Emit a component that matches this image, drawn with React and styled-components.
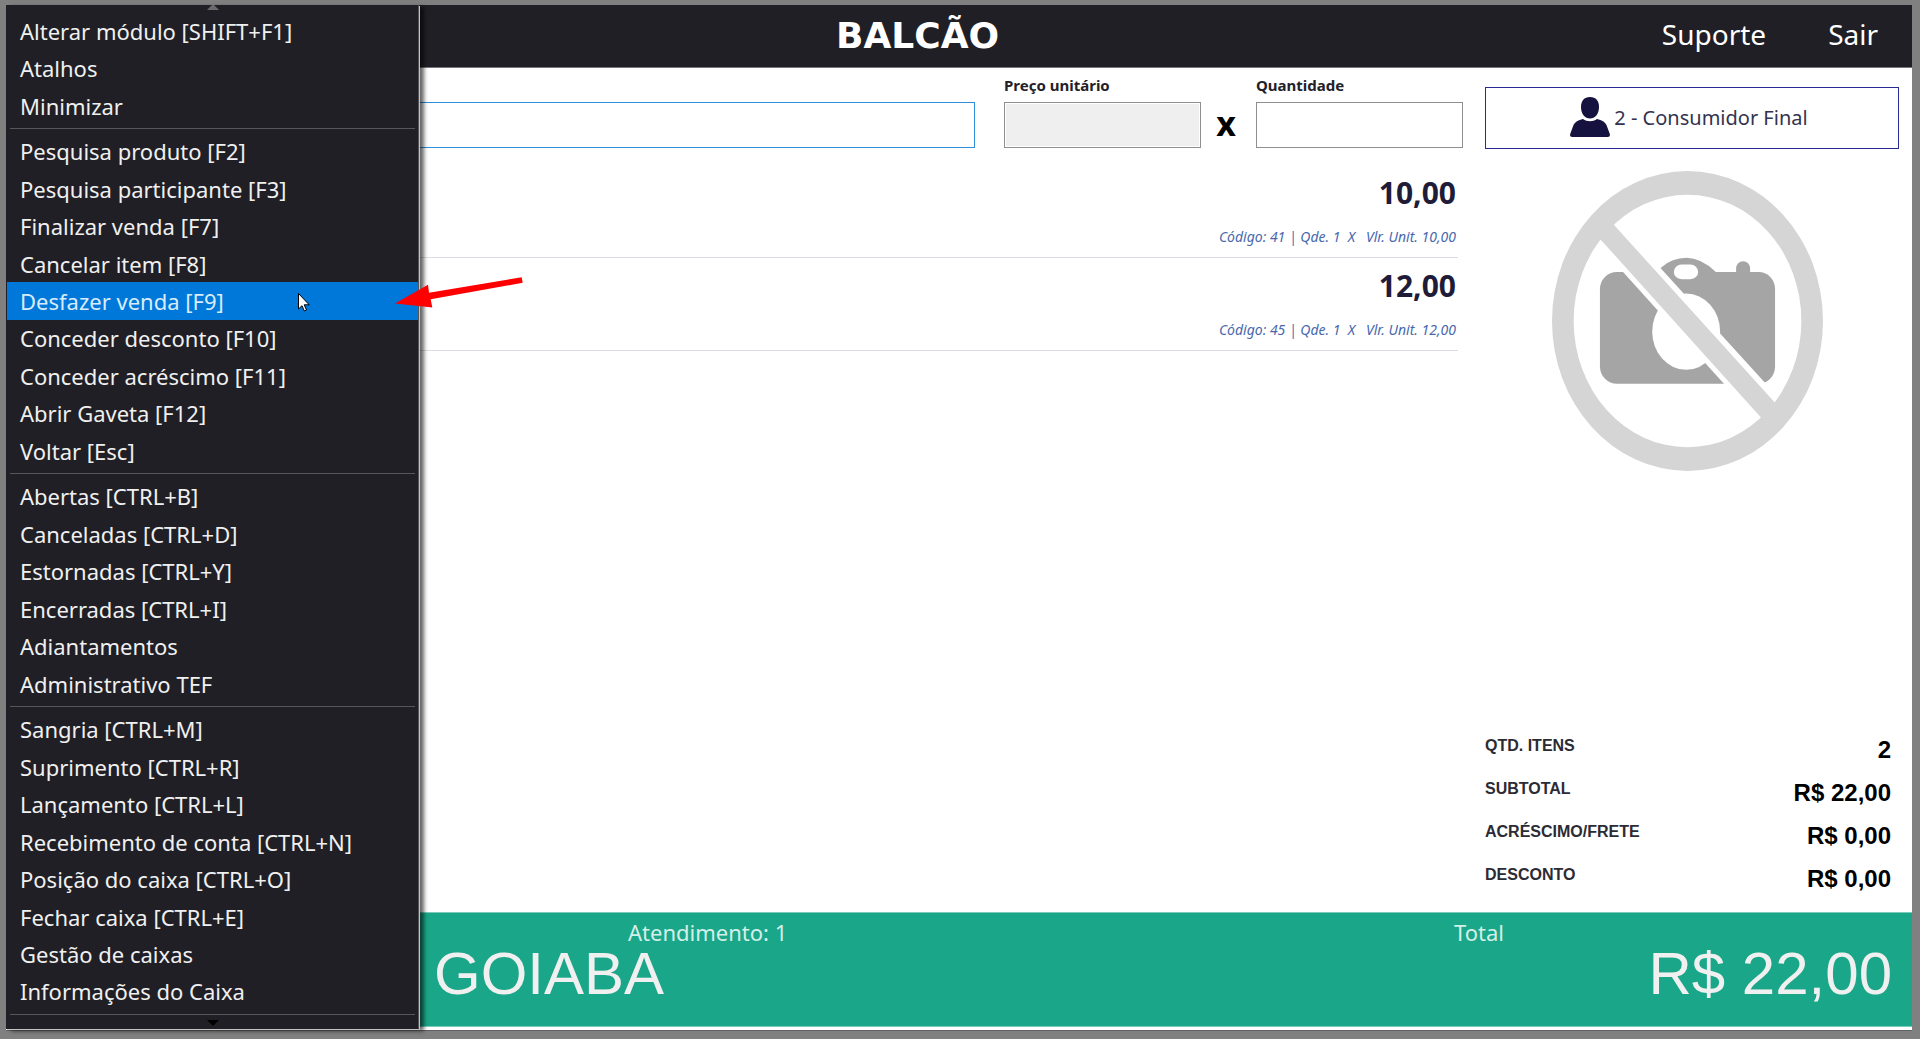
import React from 'react'
import styled, { createGlobalStyle } from 'styled-components';

const menuGroups = [
  ['Alterar módulo [SHIFT+F1]', 'Atalhos', 'Minimizar'],
  [
    'Pesquisa produto [F2]',
    'Pesquisa participante [F3]',
    'Finalizar venda [F7]',
    'Cancelar item [F8]',
    'Desfazer venda [F9]',
    'Conceder desconto [F10]',
    'Conceder acréscimo [F11]',
    'Abrir Gaveta [F12]',
    'Voltar [Esc]',
  ],
  [
    'Abertas [CTRL+B]',
    'Canceladas [CTRL+D]',
    'Estornadas [CTRL+Y]',
    'Encerradas [CTRL+I]',
    'Adiantamentos',
    'Administrativo TEF',
  ],
  [
    'Sangria [CTRL+M]',
    'Suprimento [CTRL+R]',
    'Lançamento [CTRL+L]',
    'Recebimento de conta [CTRL+N]',
    'Posição do caixa [CTRL+O]',
    'Fechar caixa [CTRL+E]',
    'Gestão de caixas',
    'Informações do Caixa',
  ],
];

const saleItems = [
  { code: 41, price: '10,00' },
  { code: 45, price: '12,00' },
];

const totals = [
  ['QTD. ITENS', '2'],
  ['SUBTOTAL', 'R$ 22,00'],
  ['ACRÉSCIMO/FRETE', 'R$ 0,00'],
  ['DESCONTO', 'R$ 0,00'],
];

const SideMenu = () => (
  <Menu>
    <MenuScroll>
      <svg width="12" height="5" viewBox="0 0 12 5"><path d="M0 5 5 0h2l5 5z" fill="#6b6b6e"/></svg>
    </MenuScroll>
    {menuGroups.map((group) => (
      <React.Fragment key={group[0]}>
        {group.map((label) => (
          <MenuItem key={label} $active={label.startsWith('Desfazer')}>{label}</MenuItem>
        ))}
        <Separator/>
      </React.Fragment>
    ))}
    <MenuScroll $bottom>
      <svg width="12" height="6" viewBox="0 0 12 6"><path d="M0 0h12L6 6z" fill="#000"/></svg>
    </MenuScroll>
  </Menu>
);

const NoPhoto = () => (
  <Photo viewBox="95 62 814 898" preserveAspectRatio="none" role="img" aria-label="Sem foto">
    <path
      fill="#a5a5a5"
      fillRule="evenodd"
      d="M290 364H421V352Q456 322 499 322T587 364H648V354A21 22 0 0 1 690 354V364H716A49 52 0 0 1 765 416V648A49 52 0 0 1 716 699H290A51 52 0 0 1 239 648V416A51 52 0 0 1 290 364Z
         M484 342A23 22 0 0 0 484 386H511A23 22 0 0 0 511 342Z"
    />
    <ellipse cx="498" cy="543" rx="102" ry="114" fill="#fff"/>
    <path d="M263 314 286 205 790 756 745 846Z" fill="#fff"/>
    <path d="M221 245 261 201 784 777 743 822Z" fill="#d5d5d5"/>
    <path
      fill="#d5d5d5"
      fillRule="evenodd"
      d="M95 511A407 449 0 0 1 909 511A407 449 0 0 1 95 511Z M160 511A342 378 0 0 0 844 511A342 378 0 0 0 160 511Z"
    />
  </Photo>
);

const App = () => {
  return (
    <Screen>
      <GlobalStyle/>
      <Window>
        <Header>
          <Title>BALCÃO</Title>
          <HeaderNav>
            <HeaderLink href="#suporte">Suporte</HeaderLink>
            <HeaderLink href="#sair">Sair</HeaderLink>
          </HeaderNav>
        </Header>
        <Body>
          <Sale>
            <Form>
              <ProductInput aria-label="Produto"/>
              <Field $width="197px">
                <Label htmlFor="preco">Preço unitário</Label>
                <Input id="preco" readOnly/>
              </Field>
              <Times>x</Times>
              <Field $width="207px">
                <Label htmlFor="quantidade">Quantidade</Label>
                <Input id="quantidade"/>
              </Field>
            </Form>
            <ItemList>
              {saleItems.map((item) => (
                <Item key={item.code}>
                  <Price>{item.price}</Price>
                  <Detail>{`Código: ${item.code} | Qde. 1  X   Vlr. Unit. ${item.price}`}</Detail>
                </Item>
              ))}
            </ItemList>
          </Sale>
          <Summary>
            <Customer type="button">
              <svg width="40" height="40" viewBox="0 0 40 40" fill="#15123f">
                <path d="M20 0c6 0 9 4 9 10 0 7-4 11.500-9 11.500S11 17 11 10C11 4 14 0 20 0z"/>
                <path d="M13 22c4 3 10 3 14 0 5 1 8 3 9.500 6l3.300 9c.5 2-.3 3-2 3H2.200c-1.700 0-2.500-1-2-3l3.300-9C5 25 8 23 13 22z"/>
              </svg>
              2 - Consumidor Final
            </Customer>
            <NoPhoto/>
            <Totals>
              {totals.map(([label, value]) => (
                <TotalRow key={label}>
                  <TotalLabel>{label}</TotalLabel>
                  <TotalValue>{value}</TotalValue>
                </TotalRow>
              ))}
            </Totals>
          </Summary>
        </Body>
        <Footer>
          <FooterBlock>
            <Caption $indent="194px">Atendimento: 1</Caption>
            <Big>GOIABA</Big>
          </FooterBlock>
          <FooterBlock $width="438px">
            <Caption>Total</Caption>
            <Big $right>R$ 22,00</Big>
          </FooterBlock>
        </Footer>
        <SideMenu/>
        <Cursor viewBox="0 0 12 19">
          <path d="M.5.500v15.500l3.500-3.300 2.300 5.300 2.200-1-2.300-5.200h5z" fill="#fff" stroke="#000"/>
        </Cursor>
        <Arrow viewBox="0 0 384 92" fill="#f00">
          <path d="M0 79 99 23 102 47 380 0 383 17 107 66 112 91z"/>
        </Arrow>
      </Window>
    </Screen>
  )
}

export default App

const GlobalStyle = createGlobalStyle`
  * {
    box-sizing: border-box;
  }

  body {
    margin: 0;
    font-family: "Noto Sans", "Open Sans", sans-serif;
  }
`;

const Screen = styled.div`
  min-height: 100vh;
  display: flex;
  padding: 5px 8px 8px 6px;
  background-color: #808080;
`;

const Window = styled.div`
  position: relative;
  flex: 1;
  display: flex;
  flex-direction: column;
  padding-bottom: 3px;
  background-color: #fff;
  border-bottom: 1px solid #606060;
`;

const Header = styled.header`
  display: flex;
  align-items: flex-start;
  height: 63px;
  padding: 0 34px 0 830px;
  border-bottom: 1px solid #77767a;
  background-color: #201f25;
`;

const Title = styled.h1`
  flex: 1;
  margin: 0;
  font-family: "DejaVu Sans", sans-serif;
  font-size: 36px;
  line-height: 62px;
  color: #fff;
`;

const HeaderNav = styled.nav`
  display: flex;
  gap: 62px;
`;

const HeaderLink = styled.a`
  font-size: 28px;
  line-height: 58px;
  color: #fff;
  text-decoration: none;
`;

const Body = styled.main`
  flex: 1;
  display: flex;
  gap: 22px;
  padding-right: 13px;
`;

const Sale = styled.section`
  flex: 1;
`;

const Form = styled.form`
  display: flex;
  align-items: flex-end;
  padding-top: 7px;
`;

const Input = styled.input`
  width: 100%;
  height: 46px;
  padding: 1px;
  border: 1px solid #8f8f8f;
  background-color: #fff;
  font-size: 20px;

  &:read-only {
    background-color: #efefef;
    background-clip: content-box;
  }
`;

const ProductInput = styled(Input)`
  flex: 1;
  margin-right: 29px;
  border-color: #2f8fdb;
`;

const Field = styled.div`
  display: flex;
  flex-direction: column;
  gap: 7px;
  width: ${(props) => props.$width};
`;

const Label = styled.label`
  font-size: 15px;
  font-weight: bold;
  line-height: 20px;
  color: #222129;
`;

const Times = styled.span`
  width: 55px;
  padding-right: 5px;
  font-size: 34px;
  font-weight: bold;
  line-height: 50px;
  text-align: center;
  color: #000;
`;

const ItemList = styled.ul`
  margin: 17px 5px 0 0;
  padding: 0;
  list-style: none;
`;

const Item = styled.li`
  display: flex;
  flex-direction: column;
  align-items: flex-end;
  gap: 16px;
  padding: 10px 2px;
  border-bottom: 1px solid #dcdce2;
`;

const Price = styled.strong`
  font-size: 30px;
  line-height: 36px;
  color: #1e1c38;
`;

const Detail = styled.span`
  font-size: 14px;
  font-style: italic;
  line-height: 20px;
  white-space: pre;
  color: #4868ad;
`;

const Summary = styled.aside`
  width: 414px;
  display: flex;
  flex-direction: column;
  padding-top: 19px;
`;

const Customer = styled.button`
  display: flex;
  align-items: center;
  justify-content: center;
  gap: 4px;
  height: 62px;
  padding: 0 6px 2px 0;
  border: 1px solid #2a2a94;
  background-color: #fff;
  font-family: inherit;
  font-size: 20px;
  color: #33334f;
`;

const Photo = styled.svg`
  width: 271px;
  height: 300px;
  margin: 22px 0 0 67px;
`;

const Totals = styled.dl`
  margin: auto 8px 12px 0;
  font-family: "Liberation Sans", Arial, sans-serif;
  font-weight: bold;
`;

const TotalRow = styled.div`
  display: flex;
  justify-content: space-between;
  height: 43px;
`;

const TotalLabel = styled.dt`
  font-size: 16px;
  line-height: 36px;
  color: #2c2b33;
`;

const TotalValue = styled.dd`
  margin: 0;
  font-size: 24px;
  line-height: 44px;
  color: #000;
`;

const Footer = styled.footer`
  display: flex;
  justify-content: space-between;
  height: 115px;
  padding: 0 20px 0 428px;
  border: 1px solid #7bcbb9;
  border-width: 1px 0;
  background-color: #1aa688;
  color: #f0f0f0;
`;

const FooterBlock = styled.div`
  display: flex;
  flex-direction: column;
  padding-top: 3px;
  width: ${(props) => props.$width};
`;

const Caption = styled.span`
  padding-left: ${(props) => props.$indent};
  font-size: 22px;
  line-height: 32px;
  color: #d5efe8;
`;

const Big = styled.span`
  font-family: "Liberation Sans", Arial, sans-serif;
  font-size: 60px;
  line-height: 52px;
  text-align: ${(props) => (props.$right ? 'right' : 'left')};
`;

const Menu = styled.nav`
  position: absolute;
  top: 0;
  bottom: 1px;
  left: 0;
  width: 413px;
  display: flex;
  flex-direction: column;
  border: 1px solid #201f25;
  border-top: 0;
  border-right: 1px solid #55555a;
  background-color: #201f25;
  box-shadow: 1px 1px 0 #c4c4c4, 5px 2px 4px rgba(0, 0, 0, 0.6);
`;

const MenuScroll = styled.div`
  display: flex;
  justify-content: center;
  align-items: ${(props) => (props.$bottom ? 'center' : 'flex-start')};
  height: ${(props) => (props.$bottom ? '10px' : '7px')};
`;

const MenuItem = styled.button`
  flex: 1;
  padding: 0 13px;
  border: 0;
  background-color: ${(props) => (props.$active ? '#0078d9' : 'transparent')};
  font-family: inherit;
  font-size: 22px;
  line-height: 30px;
  text-align: left;
  color: ${(props) => (props.$active ? '#d9ecfb' : '#f0f0f0')};
`;

const Separator = styled.hr`
  width: calc(100% - 6px);
  height: 8px;
  margin: 0 3px;
  border: 0;
  background: linear-gradient(#57575b, #57575b) center / 100% 1px no-repeat;
`;

const Cursor = styled.svg`
  position: absolute;
  top: 288px;
  left: 292px;
  width: 12px;
  height: 19px;
`;

const Arrow = styled.svg`
  position: absolute;
  top: 272px;
  left: 389px;
  width: 128px;
  height: 31px;
`;
